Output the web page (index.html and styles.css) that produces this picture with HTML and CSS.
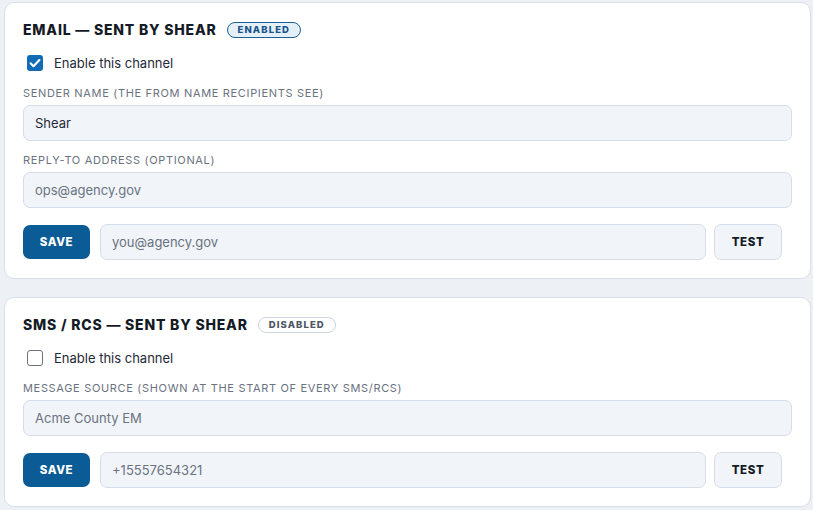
FILE: index.html
```html
<!DOCTYPE html>
<html lang="en">
<head>
<meta charset="utf-8">
<title>Channels</title>
<link rel="stylesheet" href="styles.css">
</head>
<body>
<main class="channels">
  <section class="card">
    <header class="card-head">
      <h2 class="card-title">EMAIL — SENT BY SHEAR</h2>
      <span class="badge badge-on">ENABLED</span>
    </header>
    <label class="check-row">
      <span class="check check-on">
        <svg viewBox="0 0 16 16" width="16" height="16"><path d="M3.6 8.3l2.9 2.9 5.9-6.2" fill="none" stroke="#fff" stroke-width="2.1" stroke-linecap="round" stroke-linejoin="round"/></svg>
      </span>
      <span class="check-label">Enable this channel</span>
    </label>
    <div class="field">
      <div class="field-label">SENDER NAME (THE FROM NAME RECIPIENTS SEE)</div>
      <div class="input input-value">Shear</div>
    </div>
    <div class="field">
      <div class="field-label">REPLY-TO ADDRESS (OPTIONAL)</div>
      <div class="input">ops@agency.gov</div>
    </div>
    <div class="action-row">
      <button class="btn btn-primary">SAVE</button>
      <div class="input input-grow">you@agency.gov</div>
      <button class="btn btn-ghost">TEST</button>
    </div>
  </section>

  <section class="card">
    <header class="card-head">
      <h2 class="card-title">SMS / RCS — SENT BY SHEAR</h2>
      <span class="badge badge-off">DISABLED</span>
    </header>
    <label class="check-row">
      <span class="check check-off"></span>
      <span class="check-label">Enable this channel</span>
    </label>
    <div class="field">
      <div class="field-label">MESSAGE SOURCE (SHOWN AT THE START OF EVERY SMS/RCS)</div>
      <div class="input">Acme County EM</div>
    </div>
    <div class="action-row">
      <button class="btn btn-primary">SAVE</button>
      <div class="input input-grow">+15557654321</div>
      <button class="btn btn-ghost">TEST</button>
    </div>
  </section>
</main>
</body>
</html>
```

FILE: styles.css
```css
* { box-sizing: border-box; }

html, body {
  margin: 0;
  background: #edf1f6;
}

body {
  font-family: Inter, "Noto Sans", "Liberation Sans", sans-serif;
  color: #1f2937;
  padding: 2px 2px 0 4px;
}

.channels {
  display: flex;
  flex-direction: column;
  gap: 18px;
  width: 807px;
}

.card {
  background: #ffffff;
  border: 1px solid #d7dfe9;
  border-radius: 10px;
  padding: 18px;
}

.card-head {
  display: flex;
  align-items: center;
  gap: 10px;
  height: 17px;
}

.card-title {
  margin: 0;
  font-size: 14px;
  font-weight: 800;
  letter-spacing: 0.8px;
  color: #151b26;
  line-height: 17px;
}

.badge {
  display: inline-flex;
  align-items: center;
  justify-content: center;
  height: 16px;
  padding: 0 10px;
  border-radius: 9px;
  font-size: 9.5px;
  font-weight: 800;
  letter-spacing: 1.1px;
}

.badge-on {
  border: 1.5px solid #1a5f98;
  background: #e5eff8;
  color: #17558a;
}

.badge-off {
  border: 1px solid #ccd5e0;
  background: #ffffff;
  color: #4b5563;
}

.check-row {
  display: flex;
  align-items: center;
  height: 20px;
  margin-top: 15px;
  padding-left: 4px;
  gap: 11px;
}

.check {
  width: 16px;
  height: 16px;
  border-radius: 3px;
  display: inline-flex;
  flex: none;
}

.check-on {
  background: #0f6bb6;
}

.check-off {
  background: #ffffff;
  border: 1.5px solid #6b7280;
}

.check-label {
  font-size: 13px;
  color: #1f2937;
}

.field {
  margin-top: 12px;
}

.check-row + .field {
  margin-top: 13px;
}

.field-label {
  font-size: 11px;
  line-height: 14px;
  letter-spacing: 0.67px;
  color: #6b7280;
  margin-bottom: 5px;
}

.input {
  height: 36px;
  display: flex;
  align-items: center;
  padding: 0 11px;
  background: #f1f5fa;
  border: 1px solid #d5dde8;
  border-radius: 7px;
  font-size: 13px;
  color: #6b7280;
}

.input-value {
  color: #1f2937;
}

.action-row {
  display: flex;
  align-items: center;
  margin-top: 16px;
  margin-right: 10px;
  height: 36px;
}

.input-grow {
  flex: 1;
  margin: 0 8px 0 10px;
}

.btn {
  font-family: Inter, "Noto Sans", "Liberation Sans", sans-serif;
  font-size: 11.5px;
  font-weight: 800;
  letter-spacing: 0.6px;
  border-radius: 7px;
  cursor: pointer;
}

.btn-primary {
  width: 67px;
  height: 34px;
  background: #0b5c96;
  border: none;
  color: #ffffff;
}

.btn-ghost {
  width: 68px;
  height: 36px;
  background: #f1f5fa;
  border: 1px solid #d5dde8;
  color: #151b26;
}
```
